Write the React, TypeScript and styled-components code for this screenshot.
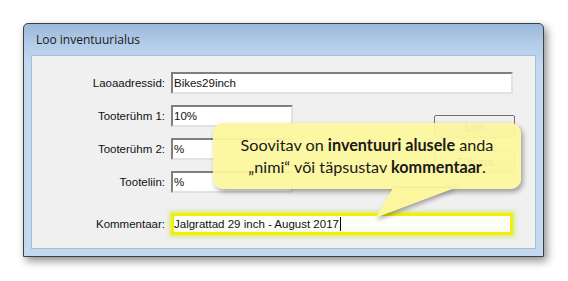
import * as React from 'react'
import styled, { createGlobalStyle } from 'styled-components'

const Global = createGlobalStyle`
  html, body {
    margin: 0;
    padding: 0;
    background: #ffffff;
  }
  body {
    width: 568px;
    height: 281px;
    overflow: hidden;
  }
`

const Stage = styled.div`
  padding: 23px 0 0 23px;
`

const Window = styled.div`
  position: relative;
  width: 521px;
  height: 234px;
  box-sizing: border-box;
  border: 1px solid #3c3f44;
  border-radius: 5px 5px 0 0;
  background: linear-gradient(180deg, #9cb9da 0px, #b3cce8 20px, #c2d9f0 40px, #c2d9f0 100%);
  box-shadow: 3px 4px 9px rgba(0, 0, 0, 0.45);
  display: flex;
  flex-direction: column;
`

const TitleBar = styled.div`
  height: 31px;
  display: flex;
  align-items: center;
  padding-left: 12px;
  font-family: 'Open Sans', 'Noto Sans', sans-serif;
  font-size: 12px;
  color: #1a1a1a;
`

const Content = styled.div`
  margin: 0 7px 7px 7px;
  flex: 1;
  background: #f0f0f0;
  border: 1px solid #a8bcd3;
  display: flex;
  padding: 16px 0 0 0;
  font-family: 'Liberation Sans', Arial, sans-serif;
  font-size: 11.5px;
  color: #111;
`

const Form = styled.div`
  display: grid;
  grid-template-columns: 133px 342px;
  column-gap: 6px;
  grid-template-rows: 22px 22px 22px 22px 22px;
  row-gap: 11px;
  align-items: center;
`

const Label = styled.div<{ $top?: number }>`
  text-align: right;
  margin-top: ${(p) => p.$top ?? 0}px;
`

const Field = styled.div<{ $w?: number; $top?: number }>`
  width: ${(p) => (p.$w ? `${p.$w}px` : '100%')};
  height: 22px;
  box-sizing: border-box;
  background: #fff;
  border: 2px solid;
  border-color: #7f7f7f #e2e2e2 #e2e2e2 #7f7f7f;
  display: flex;
  align-items: center;
  padding-left: 1px;
  margin-top: ${(p) => p.$top ?? 0}px;
  white-space: nowrap;
`

const HighlightField = styled(Field)`
  border: 3px solid #f2f200;
  padding-left: 0;
  background: linear-gradient(180deg, #ffffff 0%, #fbfff2 40%, #ffffff 60%, #f4f9e4 100%);
  box-shadow: 0 0 4px 2px rgba(205, 232, 120, 0.75);
`

const Caret = styled.span`
  display: inline-block;
  width: 1px;
  height: 14px;
  background: #000;
  margin-left: 1px;
`

const Buttons = styled.div`
  margin: 43px 0 0 -79px;
  display: flex;
  flex-direction: column;
  gap: 12px;
`

const Button = styled.div`
  width: 81px;
  height: 23px;
  box-sizing: border-box;
  border: 1px solid #707070;
  border-radius: 2px;
  background: linear-gradient(180deg, #f2f2f2 0%, #ebebeb 50%, #dddddd 51%, #cfcfcf 100%);
  display: flex;
  align-items: center;
  justify-content: center;
  font-size: 11.5px;
`

const Callout = styled.div`
  position: absolute;
  left: 189px;
  top: 99px;
  width: 308px;
  height: 66px;
  box-sizing: border-box;
  border-radius: 10px;
  background: rgba(252, 247, 158, 0.95);
  box-shadow: 2px 3px 5px rgba(0, 0, 0, 0.35);
  display: flex;
  flex-direction: column;
  align-items: center;
  justify-content: center;
  font-family: Lato, 'Open Sans', sans-serif;
  font-size: 16.2px;
  line-height: 22px;
  color: #1a1a1a;
  z-index: 2;
  b {
    font-weight: 700;
  }
`

const Tail = styled.svg`
  position: absolute;
  left: 347px;
  top: 164px;
  z-index: 2;
  overflow: visible;
  filter: drop-shadow(2px 2px 2px rgba(0, 0, 0, 0.35));
`

export default function App() {
  return (
    <Stage>
      <Global />
      <Window>
        <TitleBar>Loo inventuurialus</TitleBar>
        <Content>
          <Form>
            <Label>Laoaadressid:</Label>
            <Field>Bikes29inch</Field>
            <Label>Tooterühm 1:</Label>
            <Field $w={122}>10%</Field>
            <Label>Tooterühm 2:</Label>
            <Field $w={122}>%</Field>
            <Label>Tooteliin:</Label>
            <Field $w={122}>%</Field>
            <Label $top={17}>Kommentaar:</Label>
            <HighlightField $top={17}>
              Jalgrattad 29 inch - August 2017
              <Caret />
            </HighlightField>
          </Form>
          <Buttons>
            <Button>Loo</Button>
            <Button>Tühista</Button>
          </Buttons>
        </Content>
        <Callout>
          <div>
            Soovitav on <b>inventuuri alusele</b> anda
          </div>
          <div>
            „nimi“ või täpsustav <b>kommentaar</b>.
          </div>
        </Callout>
        <Tail width="90" height="32">
          <polygon points="22,0 84,0 4,30" fill="rgb(252,247,158)" />
        </Tail>
      </Window>
    </Stage>
  )
}
